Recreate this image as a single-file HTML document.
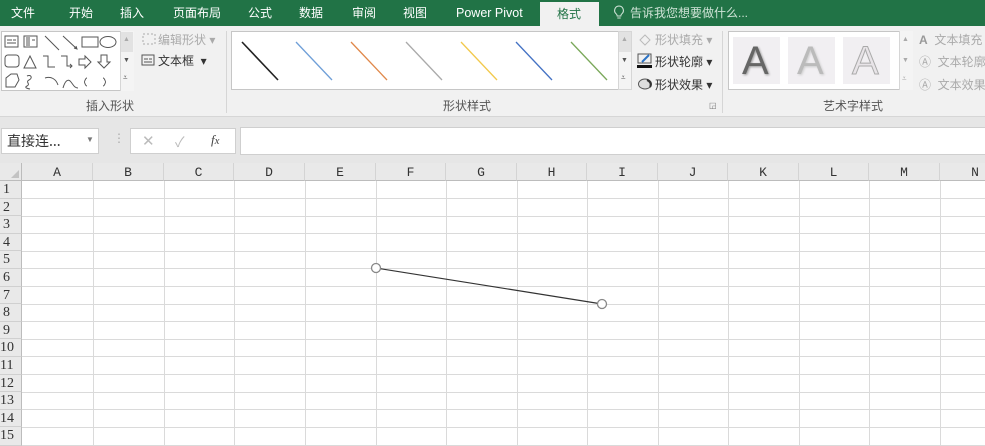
<!DOCTYPE html>
<html><head><meta charset="utf-8"><style>
*{margin:0;padding:0;box-sizing:border-box}
body{width:985px;height:446px;overflow:hidden;background:#fff;font-family:"Liberation Sans","Noto Sans CJK SC",sans-serif;position:relative;font-size:12px;color:#444}
.a{position:absolute;white-space:nowrap}
.tab{position:absolute;top:0;height:26px;line-height:26px;color:#fff;font-size:12px;white-space:nowrap}
.cj{font-family:"Noto Sans CJK SC",sans-serif}
.rh{position:absolute;left:0;width:22px;text-align:left;padding-left:3px;font-family:"Liberation Serif",serif;font-size:14px;color:#333;background:#e9e9e9;border-bottom:1px solid #d0d0d0;border-right:1px solid #bcbcbc}
.ch{position:absolute;top:163px;height:18px;text-align:center;font-family:"Liberation Mono",monospace;font-size:13px;color:#333;line-height:20px;border-right:1px solid #d4d4d4;background:#e9e9e9;border-bottom:1px solid #bcbcbc}
.hl{position:absolute;left:22px;width:963px;height:1px;background:#dadada}
.vl{position:absolute;top:181px;height:265px;width:1px;background:#dadada}
.btn{position:absolute;font-size:12px;color:#333;white-space:nowrap;line-height:16px}
.dim{color:#aaa}
</style></head><body>
<div class="a" style="left:0;top:0;width:985px;height:26px;background:#217346"></div>
<div class="tab" style="left:11px">文件</div>
<div class="tab" style="left:69px">开始</div>
<div class="tab" style="left:120px">插入</div>
<div class="tab" style="left:173px">页面布局</div>
<div class="tab" style="left:248px">公式</div>
<div class="tab" style="left:299px">数据</div>
<div class="tab" style="left:352px">审阅</div>
<div class="tab" style="left:403px">视图</div>
<div class="tab" style="left:456px;font-size:12.5px">Power Pivot</div>
<div class="a" style="left:540px;top:2px;width:59px;height:25px;background:#f1f1f1"></div>
<div class="tab" style="left:557px;color:#217346;top:1px">格式</div>
<svg class="a" style="left:613px;top:5px" width="12" height="16"><path d="M6 1a4.5 4.5 0 0 0-2.7 8c.6.5.9 1.2.9 2h3.6c0-.8.3-1.5.9-2A4.5 4.5 0 0 0 6 1zM4.3 13h3.4" stroke="#cfe3d6" fill="none" stroke-width="1.1"/></svg>
<div class="tab" style="left:630px;color:#cfe3d6;font-size:12px">告诉我您想要做什么...</div>
<div class="a" style="left:0;top:26px;width:985px;height:91px;background:#f1f1f1;border-bottom:1px solid #d6d6d6"></div>
<div class="a" style="left:0;top:117px;width:985px;height:46px;background:#e6e6e6"></div>
<div class="a" style="left:1px;top:31px;width:133px;height:60px;background:#fff;border:1px solid #c6c6c6"></div>
<div class="a" style="left:120px;top:31px;width:14px;height:60px;background:#f4f4f4;border-left:1px solid #d6d6d6"></div>
<div class="a" style="left:121px;top:32px;width:12px;height:20px;background:#e2e2e2"></div>
<div class="a dim" style="left:123px;top:36px;font-size:7px">▲</div>
<div class="a" style="left:123px;top:57px;font-size:7px;color:#555">▼</div>
<div class="a" style="left:123px;top:73px;font-size:8px;color:#555">⩡</div>
<svg class="a" style="left:2px;top:32px" width="118" height="58" fill="none" stroke="#555" stroke-width="1">
<rect x="3" y="4" width="13" height="11"/><path d="M5 8h5M5 11h9M11 8h3"/>
<rect x="22" y="4" width="13" height="11"/><path d="M25 5v9M27 5v9M30 8h3"/>
<path d="M43 4l14 14M61 4l14 13M72 16l3 1-1-3"/>
<rect x="80" y="5" width="16" height="10"/><ellipse cx="106" cy="10" rx="8" ry="5.5"/>
<rect x="3" y="23" width="14" height="12" rx="3"/><path d="M22 36l6-12 6 12z"/>
<path d="M41 24h5v11h7M59 24h6v10h5M68 32l2 2-2 2"/>
<path d="M77 27h6v-3l6 6-6 6v-3h-6z"/><path d="M99 23h6v7h3l-6 6-6-6h3z"/>
<path d="M4 55v-9l5-4h6l2 6-4 7z"/><path d="M25 44c4-2 6 2 2 4s2 4-2 6 3 3 3 3"/>
<path d="M43 46c6-2 11 1 13 7"/><path d="M61 56c2-7 5-10 8-6s4 6 7 6"/>
<path d="M85 46c-2 0-2 4-3 4 1 0 1 4 3 4M101 46c2 0 2 4 3 4-1 0-1 4-3 4"/>
</svg>
<svg class="a" style="left:141px;top:32px" width="16" height="14" fill="none" stroke="#aaa" stroke-dasharray="2 2"><rect x="2" y="2" width="12" height="10"/></svg>
<div class="btn dim" style="left:158px;top:32px">编辑形状 ▾</div>
<svg class="a" style="left:141px;top:54px" width="15" height="13" fill="none" stroke="#555"><rect x="1" y="1" width="12" height="10"/><path d="M3 5h4M3 8h8M8 5h3"/></svg>
<div class="btn" style="left:158px;top:53px">文本框 &nbsp;▾</div>
<div class="btn" style="left:86px;top:98px;color:#555">插入形状</div>
<div class="a" style="left:226px;top:31px;width:1px;height:82px;background:#d6d6d6"></div>
<div class="a" style="left:231px;top:31px;width:388px;height:59px;background:#fff;border:1px solid #c6c6c6"></div>
<div class="a" style="left:618px;top:31px;width:14px;height:59px;background:#f4f4f4;border:1px solid #d6d6d6"></div>
<div class="a" style="left:619px;top:32px;width:12px;height:20px;background:#e2e2e2"></div>
<div class="a dim" style="left:621px;top:36px;font-size:7px">▲</div>
<div class="a" style="left:621px;top:57px;font-size:7px;color:#555">▼</div>
<div class="a" style="left:621px;top:73px;font-size:8px;color:#555">⩡</div>
<svg class="a" style="left:231px;top:31px" width="388" height="59" stroke-width="1.3">
<path d="M11 11l36 38" stroke="#222" stroke-width="1.6"/>
<path d="M65 11l36 38" stroke="#6f9fd8"/>
<path d="M120 11l36 38" stroke="#e0884a"/>
<path d="M175 11l36 38" stroke="#aaa"/>
<path d="M230 11l36 38" stroke="#f2c94c"/>
<path d="M285 11l36 38" stroke="#4472c4"/>
<path d="M340 11l36 38" stroke="#7aa85a"/>
</svg>
<div class="btn dim" style="left:655px;top:32px">形状填充 ▾</div>
<svg class="a" style="left:637px;top:32px" width="16" height="14" fill="none" stroke="#bbb"><path d="M3 8l5-5 5 5-5 5z"/></svg>
<svg class="a" style="left:637px;top:53px" width="16" height="16"><rect x="1" y="1" width="13" height="9" fill="none" stroke="#555"/><path d="M5 9l7-7" stroke="#2b73c6" stroke-width="2"/><rect x="0" y="12" width="15" height="3" fill="#111"/></svg>
<div class="btn" style="left:655px;top:54px">形状轮廓 ▾</div>
<svg class="a" style="left:637px;top:76px" width="16" height="14"><ellipse cx="8" cy="8" rx="6.5" ry="5" fill="#ddd" stroke="#555"/><path d="M10 4a6 5 0 0 1 3 7" stroke="#333" stroke-width="2" fill="none"/></svg>
<div class="btn" style="left:655px;top:77px">形状效果 ▾</div>
<div class="btn" style="left:443px;top:98px;color:#555">形状样式</div>
<div class="a" style="left:709px;top:101px;font-size:8px;color:#777">◲</div>
<div class="a" style="left:722px;top:31px;width:1px;height:82px;background:#d6d6d6"></div>
<div class="a" style="left:728px;top:31px;width:185px;height:59px;background:#fff;border:1px solid #c6c6c6"></div>
<div class="a" style="left:733px;top:37px;width:47px;height:47px;background:#f1eff2"></div>
<div class="a" style="left:788px;top:37px;width:47px;height:47px;background:#f1eff2"></div>
<div class="a" style="left:843px;top:37px;width:47px;height:47px;background:#f1eff2"></div>
<div class="a" style="left:742px;top:38px;font-size:40px;line-height:46px;color:#666;text-shadow:1px 1px 2px #999">A</div>
<div class="a" style="left:797px;top:38px;font-size:40px;line-height:46px;color:#bbb;text-shadow:1px 1px 2px #ccc">A</div>
<div class="a" style="left:852px;top:38px;font-size:40px;line-height:46px;color:#e8e4e8;-webkit-text-stroke:1px #aaa">A</div>
<div class="a" style="left:899px;top:31px;width:14px;height:59px;background:#f4f4f4;border-left:1px solid #d6d6d6"></div>
<div class="a dim" style="left:902px;top:36px;font-size:7px">▲</div>
<div class="a dim" style="left:902px;top:57px;font-size:7px">▼</div>
<div class="a dim" style="left:902px;top:74px;font-size:8px">⩡</div>
<div class="btn dim" style="left:919px;top:32px"><b style="color:#999">A</b>&nbsp; 文本填充</div>
<div class="btn dim" style="left:919px;top:54px">Ⓐ&nbsp; 文本轮廓</div>
<div class="btn dim" style="left:919px;top:77px">Ⓐ&nbsp; 文本效果</div>
<div class="btn" style="left:823px;top:98px;color:#555">艺术字样式</div>
<div class="a" style="left:1px;top:128px;width:98px;height:26px;background:#fff;border:1px solid #cfcfcf"></div>
<div class="a cj" style="left:7px;top:131px;font-size:14px;line-height:20px;color:#333">直接连...</div>
<div class="a" style="left:86px;top:135px;font-size:8px;color:#777">▼</div>
<div class="a" style="left:113px;top:131px;font-size:12px;color:#aaa">⋮</div>
<div class="a" style="left:130px;top:128px;width:106px;height:26px;background:#fff;border:1px solid #cfcfcf"></div>
<div class="a" style="left:142px;top:132px;font-size:15px;color:#bbb">✕</div>
<div class="a" style="left:175px;top:132px;font-size:14px;color:#bbb">✓</div>
<div class="a" style="left:211px;top:132px;font-family:'Liberation Serif',serif;font-style:italic;font-size:13px;color:#444">f<small>x</small></div>
<div class="a" style="left:240px;top:127px;width:745px;height:28px;background:#fff;border:1px solid #cfcfcf;border-right:none"></div>
<div class="a" style="left:0;top:163px;width:22px;height:18px;background:#e9e9e9;border-right:1px solid #bcbcbc;border-bottom:1px solid #bcbcbc"></div>
<svg class="a" style="left:10px;top:169px" width="10" height="10"><path d="M9 1v8H1z" fill="#c3c3c3"/></svg>
<div class="ch" style="left:22px;width:71px">A</div>
<div class="ch" style="left:93px;width:71px">B</div>
<div class="ch" style="left:164px;width:70px">C</div>
<div class="ch" style="left:234px;width:71px">D</div>
<div class="ch" style="left:305px;width:71px">E</div>
<div class="ch" style="left:376px;width:70px">F</div>
<div class="ch" style="left:446px;width:71px">G</div>
<div class="ch" style="left:517px;width:70px">H</div>
<div class="ch" style="left:587px;width:71px">I</div>
<div class="ch" style="left:658px;width:70px">J</div>
<div class="ch" style="left:728px;width:71px">K</div>
<div class="ch" style="left:799px;width:70px">L</div>
<div class="ch" style="left:869px;width:71px">M</div>
<div class="ch" style="left:940px;width:71px">N</div>
<div class="rh" style="top:181px;height:17.6px;line-height:18px">1</div>
<div class="rh" style="top:198.6px;height:17.6px;line-height:18px">2</div>
<div class="rh" style="top:216.2px;height:17.6px;line-height:18px">3</div>
<div class="rh" style="top:233.8px;height:17.6px;line-height:18px">4</div>
<div class="rh" style="top:251.4px;height:17.6px;line-height:18px">5</div>
<div class="rh" style="top:269px;height:17.6px;line-height:18px">6</div>
<div class="rh" style="top:286.6px;height:17.6px;line-height:18px">7</div>
<div class="rh" style="top:304.2px;height:17.6px;line-height:18px">8</div>
<div class="rh" style="top:321.8px;height:17.6px;line-height:18px">9</div>
<div class="rh" style="top:339.4px;height:17.6px;line-height:18px;padding-left:0">10</div>
<div class="rh" style="top:357px;height:17.6px;line-height:18px;padding-left:0">11</div>
<div class="rh" style="top:374.6px;height:17.6px;line-height:18px;padding-left:0">12</div>
<div class="rh" style="top:392.2px;height:17.6px;line-height:18px;padding-left:0">13</div>
<div class="rh" style="top:409.8px;height:17.6px;line-height:18px;padding-left:0">14</div>
<div class="rh" style="top:427.4px;height:18.6px;line-height:18px;padding-left:0">15</div>
<div class="hl" style="top:198px"></div><div class="hl" style="top:216px"></div><div class="hl" style="top:233px"></div>
<div class="hl" style="top:251px"></div><div class="hl" style="top:268px"></div><div class="hl" style="top:286px"></div>
<div class="hl" style="top:304px"></div><div class="hl" style="top:321px"></div><div class="hl" style="top:339px"></div>
<div class="hl" style="top:356px"></div><div class="hl" style="top:374px"></div><div class="hl" style="top:392px"></div>
<div class="hl" style="top:409px"></div><div class="hl" style="top:427px"></div><div class="hl" style="top:445px"></div>
<div class="vl" style="left:93px"></div><div class="vl" style="left:164px"></div><div class="vl" style="left:234px"></div>
<div class="vl" style="left:305px"></div><div class="vl" style="left:376px"></div><div class="vl" style="left:446px"></div>
<div class="vl" style="left:517px"></div><div class="vl" style="left:587px"></div><div class="vl" style="left:658px"></div>
<div class="vl" style="left:728px"></div><div class="vl" style="left:799px"></div><div class="vl" style="left:869px"></div>
<div class="vl" style="left:940px"></div>
<svg class="a" style="left:0;top:0" width="985" height="446">
<line x1="376" y1="268" x2="602" y2="304" stroke="#333" stroke-width="1.2"/>
<circle cx="376" cy="268" r="4.5" fill="#fff" stroke="#888" stroke-width="1.3"/>
<circle cx="602" cy="304" r="4.5" fill="#fff" stroke="#888" stroke-width="1.3"/>
</svg>
</body></html>
